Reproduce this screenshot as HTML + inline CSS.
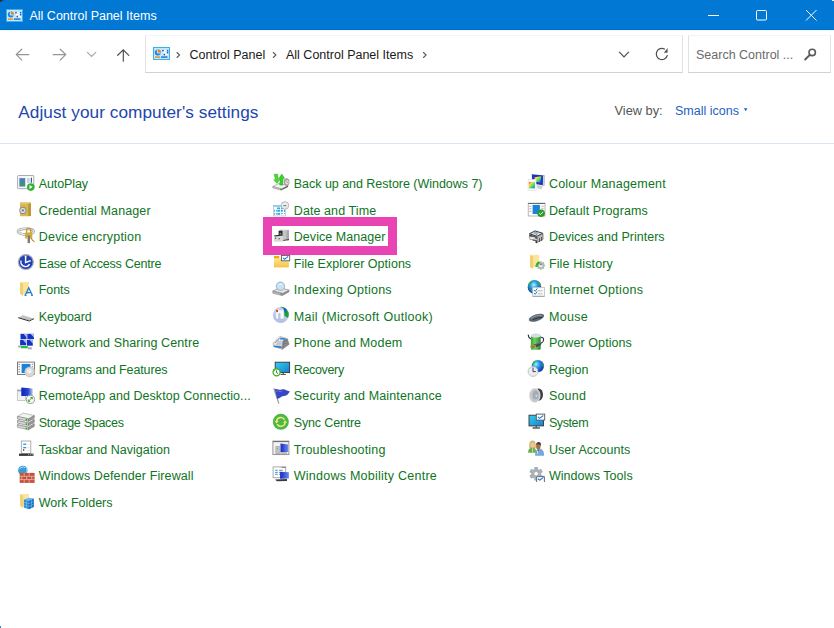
<!DOCTYPE html>
<html><head><meta charset="utf-8">
<style>
html,body{margin:0;padding:0;width:834px;height:628px;overflow:hidden;background:#fff;font-family:"Liberation Sans",sans-serif;}
.abs{position:absolute}
svg{display:block}
#title{position:absolute;left:0;top:0;width:834px;height:30px;background:#0078d4;box-shadow:inset 0 -1px 0 #006fcb;}
#tline{position:absolute;left:0;top:30px;width:834px;height:1px;background:#eef5fc}
#title .t{position:absolute;left:29.5px;top:7.5px;font-size:12.5px;color:#fff;line-height:16px;white-space:nowrap}
.it{position:absolute;font-size:12.5px;line-height:16px;color:#0f7424;white-space:nowrap}
.ic{position:absolute;width:16px;height:16px}
.ic svg{display:block}
#addr{position:absolute;left:145px;top:35px;width:536px;height:36px;border:1px solid #e2e2e2;border-top-color:#f4f4f4;border-bottom-color:#d2d2d2;box-sizing:content-box}
#search{position:absolute;left:688px;top:35px;width:141px;height:36px;border:1px solid #e2e2e2;border-top-color:#f4f4f4;border-bottom-color:#d2d2d2}
.crumb{position:absolute;font-size:12.5px;line-height:16px;color:#1a1a1a;white-space:nowrap}
#heading{position:absolute;left:18.3px;top:100.6px;font-size:17.2px;letter-spacing:0.06px;line-height:22px;color:#1c46ac;white-space:nowrap}
#viewby{position:absolute;left:614.5px;top:103px;font-size:12.8px;line-height:16px;color:#555;white-space:nowrap}
#small{position:absolute;left:675px;top:103px;font-size:12.5px;line-height:16px;color:#1e5fbf;white-space:nowrap}
#divider{position:absolute;left:0;top:143px;width:834px;height:1px;background:#dbe5f1}
#pink{position:absolute;left:263px;top:217px;width:116px;height:20px;border:9px solid #e844b4}
</style></head><body>
<div id="title">
  <div class="t">All Control Panel Items</div>
  <div class="abs" style="left:6px;top:8.5px;width:17px;height:13px"><svg width="17" height="13" viewBox="0 0 17 13"><rect x="0.5" y="0.5" width="16" height="12" fill="#c6e7fa" stroke="#3aaef0"/><circle cx="4.8" cy="5.5" r="3" fill="#1a86e0"/><path d="M4.8 5.5 V2.5 A3 3 0 0 1 7.8 5.5 Z" fill="#f28a00"/><path d="M4.3 2.5 V6 H7.8" fill="none" stroke="#fff" stroke-width="0.8"/><rect x="10" y="3" width="5" height="1.2" fill="#fff"/><rect x="10" y="5" width="5" height="1.2" fill="#fff"/><rect x="10" y="7" width="5" height="1.2" fill="#fff"/><circle cx="10" cy="3.6" r="0.9" fill="#1c5fc0"/><circle cx="14.6" cy="3.6" r="0.9" fill="#1c5fc0"/><circle cx="14.6" cy="5.6" r="0.9" fill="#1c5fc0"/><circle cx="11.3" cy="7.6" r="0.9" fill="#1c5fc0"/><rect x="2" y="9.4" width="5" height="1.4" fill="#f08a10"/><rect x="8" y="9.4" width="6.5" height="1.4" fill="#1a70d0"/></svg></div>
  <svg class="abs" style="left:0;top:0" width="834" height="30">
    <g stroke="#fff" stroke-width="1" fill="none">
      <path d="M708 15.5 H719"/>
      <rect x="756.5" y="10.5" width="10" height="9.5" rx="1"/>
      <path d="M806 10 L816.5 20.5 M816.5 10 L806 20.5"/>
    </g>
  </svg>

</div>
<div id="tline"></div>
<div id="addr"></div>
<div id="search"></div>
<svg class="abs" style="left:0;top:30px" width="834" height="50" viewBox="0 30 834 50">
  <g fill="none" stroke="#959595" stroke-width="1.2" stroke-linecap="round">
    <path d="M16.3 54.6 H28.8 M21.8 49.2 L16.3 54.6 L21.8 60.1"/>
    <path d="M53.2 54.6 H65.7 M60.2 49.2 L65.7 54.6 L60.2 60.1"/>
    <path d="M87.4 52.3 L91.6 56.5 L95.8 52.3" stroke="#a8a8a8"/>
  </g>
  <g fill="none" stroke="#505050" stroke-width="1.2" stroke-linecap="round">
    <path d="M123.3 49.8 V61.2 M117.7 55.3 L123.3 49.8 L128.8 55.3"/>
    <path d="M619.4 52.2 L624 56.8 L628.6 52.2"/>
    <path d="M667.3 55.5 A5.6 5.6 0 1 1 664.5 49" />
  </g>
  <path d="M667.6 48 L667.6 52.7 L663.8 52.7 Z" fill="#5a5a5a"/>
  <g fill="none" stroke="#5a5a5a" stroke-width="1.1" stroke-linecap="round">
    <path d="M177 52.5 L179.6 55 L177 57.5"/>
    <path d="M273.3 52.5 L275.9 55 L273.3 57.5"/>
    <path d="M423.5 52.5 L426.1 55 L423.5 57.5"/>
  </g>
  <circle cx="812.2" cy="52.4" r="3.2" fill="none" stroke="#5a5a5a" stroke-width="1.6"/>
  <path d="M809.8 54.9 L805.2 59.5" stroke="#5a5a5a" stroke-width="2" stroke-linecap="round"/>
</svg>
<div class="abs" style="left:153px;top:47px;width:17px;height:13px"><svg width="17" height="13" viewBox="0 0 17 13"><rect x="0.5" y="0.5" width="16" height="12" fill="#c6e7fa" stroke="#3aaef0"/><circle cx="4.8" cy="5.5" r="3" fill="#1a86e0"/><path d="M4.8 5.5 V2.5 A3 3 0 0 1 7.8 5.5 Z" fill="#f28a00"/><path d="M4.3 2.5 V6 H7.8" fill="none" stroke="#fff" stroke-width="0.8"/><rect x="10" y="3" width="5" height="1.2" fill="#fff"/><rect x="10" y="5" width="5" height="1.2" fill="#fff"/><rect x="10" y="7" width="5" height="1.2" fill="#fff"/><circle cx="10" cy="3.6" r="0.9" fill="#1c5fc0"/><circle cx="14.6" cy="3.6" r="0.9" fill="#1c5fc0"/><circle cx="14.6" cy="5.6" r="0.9" fill="#1c5fc0"/><circle cx="11.3" cy="7.6" r="0.9" fill="#1c5fc0"/><rect x="2" y="9.4" width="5" height="1.4" fill="#f08a10"/><rect x="8" y="9.4" width="6.5" height="1.4" fill="#1a70d0"/></svg></div>

<div class="crumb" style="left:189.5px;top:46.9px">Control Panel</div>
<div class="crumb" style="left:286px;top:46.9px">All Control Panel Items</div>
<div class="crumb" style="left:696px;top:47px;color:#6b6b6b">Search Control ...</div>
<div id="heading">Adjust your computer's settings</div>
<div id="viewby">View by:</div>
<div id="small">Small icons</div>
<svg class="abs" style="left:740px;top:104px" width="12" height="12" viewBox="740 104 12 12"><path d="M743.9 108.3 L747.5 108.3 L745.7 111.2 Z" fill="#1a5fcc"/></svg>
<div id="divider"></div>
<div id="pink"></div>
<div class="it" style="left:38.8px;top:176.00px;letter-spacing:-0.114px">AutoPlay</div>
<div class="it" style="left:38.8px;top:202.55px;letter-spacing:0.117px">Credential Manager</div>
<div class="it" style="left:38.8px;top:229.10px;letter-spacing:0.188px">Device encryption</div>
<div class="it" style="left:38.8px;top:255.65px;letter-spacing:-0.19px">Ease of Access Centre</div>
<div class="it" style="left:38.8px;top:282.20px;letter-spacing:-0.1px">Fonts</div>
<div class="it" style="left:38.8px;top:308.75px;letter-spacing:-0.086px">Keyboard</div>
<div class="it" style="left:38.8px;top:335.30px;letter-spacing:0.104px">Network and Sharing Centre</div>
<div class="it" style="left:38.8px;top:361.85px;letter-spacing:-0.13px">Programs and Features</div>
<div class="it" style="left:38.8px;top:388.40px;letter-spacing:0.061px">RemoteApp and Desktop Connectio...</div>
<div class="it" style="left:38.8px;top:414.95px;letter-spacing:-0.293px">Storage Spaces</div>
<div class="it" style="left:38.8px;top:441.50px;letter-spacing:0.028px">Taskbar and Navigation</div>
<div class="it" style="left:38.8px;top:468.05px;letter-spacing:0.108px">Windows Defender Firewall</div>
<div class="it" style="left:38.8px;top:494.60px;letter-spacing:-0.037px">Work Folders</div>
<div class="it" style="left:293.8px;top:176.00px;letter-spacing:-0.033px">Back up and Restore (Windows 7)</div>
<div class="it" style="left:293.8px;top:202.55px;letter-spacing:0.083px">Date and Time</div>
<div class="it" style="left:293.8px;top:229.10px;letter-spacing:0.047px">Device Manager</div>
<div class="it" style="left:293.8px;top:255.65px;letter-spacing:0.03px">File Explorer Options</div>
<div class="it" style="left:293.8px;top:282.20px;letter-spacing:0.267px">Indexing Options</div>
<div class="it" style="left:293.8px;top:308.75px;letter-spacing:0.304px">Mail (Microsoft Outlook)</div>
<div class="it" style="left:293.8px;top:335.30px;letter-spacing:0.2px">Phone and Modem</div>
<div class="it" style="left:293.8px;top:361.85px;letter-spacing:-0.343px">Recovery</div>
<div class="it" style="left:293.8px;top:388.40px;letter-spacing:0.148px">Security and Maintenance</div>
<div class="it" style="left:293.8px;top:414.95px;letter-spacing:-0.16px">Sync Centre</div>
<div class="it" style="left:293.8px;top:441.50px;letter-spacing:0.171px">Troubleshooting</div>
<div class="it" style="left:293.8px;top:468.05px;letter-spacing:0.246px">Windows Mobility Centre</div>
<div class="it" style="left:548.9px;top:176.00px;letter-spacing:0.224px">Colour Management</div>
<div class="it" style="left:548.9px;top:202.55px;letter-spacing:0.106px">Default Programs</div>
<div class="it" style="left:548.9px;top:229.10px;letter-spacing:0.021px">Devices and Printers</div>
<div class="it" style="left:548.9px;top:255.65px;letter-spacing:0.128px">File History</div>
<div class="it" style="left:548.9px;top:282.20px;letter-spacing:0.347px">Internet Options</div>
<div class="it" style="left:548.9px;top:308.75px;letter-spacing:0.35px">Mouse</div>
<div class="it" style="left:548.9px;top:335.30px;letter-spacing:0.083px">Power Options</div>
<div class="it" style="left:548.9px;top:361.85px;letter-spacing:0.0px">Region</div>
<div class="it" style="left:548.9px;top:388.40px;letter-spacing:0.2px">Sound</div>
<div class="it" style="left:548.9px;top:414.95px;letter-spacing:-0.4px">System</div>
<div class="it" style="left:548.9px;top:441.50px;letter-spacing:0.067px">User Accounts</div>
<div class="it" style="left:548.9px;top:468.05px;letter-spacing:0.05px">Windows Tools</div>
<svg class="abs" style="left:0;top:0" width="834" height="628" viewBox="0 0 834 628">
<defs>
<linearGradient id="gTeal" x1="0" y1="0" x2="0" y2="1"><stop offset="0" stop-color="#4a78c8"/><stop offset="1" stop-color="#3a9a6a"/></linearGradient>
<linearGradient id="gCyan" x1="0" y1="0" x2="1" y2="1"><stop offset="0" stop-color="#30d0f0"/><stop offset="1" stop-color="#1a7ed0"/></linearGradient>
<linearGradient id="gBlueL" x1="0" y1="0" x2="1" y2="0"><stop offset="0" stop-color="#1022b8"/><stop offset="0.6" stop-color="#2848d0"/><stop offset="1" stop-color="#b8c8f0"/></linearGradient>
<linearGradient id="gYel" x1="0" y1="0" x2="0" y2="1"><stop offset="0" stop-color="#fde68e"/><stop offset="1" stop-color="#f5c24a"/></linearGradient>
<linearGradient id="gGreen" x1="0" y1="0" x2="1" y2="0"><stop offset="0" stop-color="#3aa038"/><stop offset="0.4" stop-color="#70d060"/><stop offset="1" stop-color="#2a8a2a"/></linearGradient>
<linearGradient id="gRain" x1="0" y1="0" x2="1" y2="1"><stop offset="0" stop-color="#ff3030"/><stop offset="0.3" stop-color="#ffe040"/><stop offset="0.6" stop-color="#40e060"/><stop offset="1" stop-color="#3060ff"/></linearGradient>
<linearGradient id="gMon" x1="0" y1="0" x2="1" y2="0"><stop offset="0" stop-color="#1428c8"/><stop offset="1" stop-color="#6c8ae8"/></linearGradient>
</defs>
<g transform="translate(14 172)">
<rect x="3.6" y="3.5" width="16.2" height="13.2" rx="0.8" fill="#f2f2f2" stroke="#a4a4a4" stroke-width="0.9"/>
<rect x="4.6" y="4.7" width="14.2" height="11" fill="#fff"/>
<rect x="5.4" y="6.1" width="5.7" height="8.4" fill="url(#gTeal)" stroke="#8a9ad0" stroke-width="0.4"/>
<rect x="13" y="6" width="2.7" height="5" fill="#d0d0d0"/>
<rect x="16.8" y="5.7" width="1.2" height="5" fill="#2a5ab0"/>
<circle cx="16.8" cy="15.1" r="3.8" fill="#34b234"/>
<path d="M15.5 13.1 L18.6 15.1 L15.5 17.1 Z" fill="#fff"/></g>
<g transform="translate(14 198)">
<rect x="6" y="4.2" width="10.8" height="14" rx="0.8" fill="#d9b752"/>
<rect x="14.3" y="4.8" width="2.5" height="13.2" fill="#b99330"/>
<rect x="6.4" y="4.2" width="9.5" height="1.4" fill="#ebd084"/>
<circle cx="8.9" cy="12.4" r="3.6" fill="#8a8a8a"/>
<circle cx="8.9" cy="12.4" r="2.6" fill="#e4e4e4"/>
<path d="M7.2 11.5 L10.6 13.3 M8.9 10.5 V14.3 M7.2 13.3 L10.6 11.5" stroke="#9a9a9a" stroke-width="0.6"/>
<circle cx="8.9" cy="12.4" r="0.8" fill="#6a6a6a"/></g>
<g transform="translate(14 198)">
<ellipse cx="11.8" cy="33.6" rx="7.9" ry="2.9" fill="none" stroke="#9c9c9c" stroke-width="2.4"/>
<ellipse cx="11.8" cy="33.6" rx="7.9" ry="2.9" fill="none" stroke="#e8e8e8" stroke-width="1.2"/>
<path d="M12.6 35 V32.2 A2.1 2.1 0 0 1 16.8 32.2 V35" fill="none" stroke="#c49a2c" stroke-width="1.3"/>
<rect x="11.1" y="34.4" width="7.2" height="6.1" rx="0.6" fill="#d2aa3a"/>
<rect x="13.6" y="37.5" width="2.4" height="7.6" fill="#7c7c7c"/><rect x="12.6" y="39" width="1.2" height="1.6" fill="#c8c8c8"/>
<path d="M17 40 C18 42, 19.5 43.5, 20.6 43.6" fill="none" stroke="#c29a2a" stroke-width="1.3"/></g>
<g transform="translate(14 251)">
<circle cx="11.85" cy="11.1" r="8" fill="#b4bac6"/><circle cx="11.85" cy="11.1" r="7.6" fill="none" stroke="#80889a" stroke-width="0.6" stroke-dasharray="1 0.8"/>
<circle cx="11.85" cy="11.1" r="6.9" fill="#2242b4"/>
<path d="M7 9.5 C6.5 12.5, 8 15, 11 15.5 C13.5 15.8, 15 14.5, 15.5 13" fill="none" stroke="#fff" stroke-width="1.3"/>
<path d="M11.6 5.8 V11.5 L16.8 9.6" fill="none" stroke="#fff" stroke-width="1.4"/>
<circle cx="11.6" cy="5.4" r="0.9" fill="#fff"/></g>
<g transform="translate(14 251)"><rect x="6.1" y="31" width="8.8" height="12.100000000000001" fill="#fce49c"/><path d="M6.1 31.3 L9.1 33 L9.1 45.1 L6.1 43.1 Z" fill="#f2cf70"/>
<path d="M11.2 44.3 L14.7 36.8 L18.3 44.3 M12.5 41.6 H17" fill="none" stroke="#1a80d4" stroke-width="1.3"/>
<path d="M10.4 44.4 H12.6 M17 44.4 H19" stroke="#1a80d4" stroke-width="0.9"/></g>
<g transform="translate(14 304)">
<path d="M4.2 13.6 L9 11.1 L19.9 14.6 L15.2 16.9 Z" fill="#d4d4d4"/>
<path d="M4.2 13.7 L15.2 17 L19.9 14.7" fill="none" stroke="#303030" stroke-width="1"/>
<path d="M6 13.2 L16 16 M8 12 L18 15" stroke="#9a9a9a" stroke-width="0.5"/></g>
<g transform="translate(14 304)">
<rect x="6.5" y="29.8" width="6" height="5.4" fill="#1632c4"/>
<rect x="13.3" y="29.8" width="6.6" height="5.4" fill="#1632c4"/>
<rect x="6.1" y="35.9" width="6.1" height="5.4" fill="#1632c4"/>
<rect x="12.9" y="35.9" width="5.9" height="5.8" fill="#1632c4"/>
<path d="M9.5 29.8 H12.5 V33.5 Z M16.5 29.8 H19.9 V33.5 Z M9 35.9 H12.2 V39.5 Z M15.8 35.9 H18.8 V39.8 Z" fill="#c8d4f4" opacity="0.85"/>
<rect x="6.9" y="42" width="6.9" height="2.3" fill="#22c040"/>
<rect x="4.2" y="41.5" width="2.7" height="2" fill="#a8a8a8"/>
<rect x="14" y="43.3" width="3.8" height="2" fill="#a8a8a8"/></g>
<g transform="translate(14 357)">
<rect x="3.5" y="5.1" width="17" height="12.4" fill="#fff" stroke="#707070" stroke-width="0.9"/>
<path d="M4.5 7.3 H6 M4.5 9.8 H6 M4.5 12.3 H6 M4.5 14.8 H6 M17.8 7.3 H19.3 M17.8 9.8 H19.3" stroke="#6a6a6a" stroke-width="0.8"/>
<rect x="7.6" y="6.9" width="8.8" height="9.1" fill="#1a82da"/>
<circle cx="15.7" cy="14.9" r="5" fill="#d6d6d6" stroke="#b4b4b4" stroke-width="0.6"/>
<circle cx="15.2" cy="14" r="2.5" fill="#ececec"/>
<circle cx="15.7" cy="14.9" r="0.8" fill="#fff"/></g>
<g transform="translate(14 357)">
<rect x="3.4" y="32.9" width="8.1" height="10.7" fill="#f2f2f2" stroke="#b8b8b8" stroke-width="0.7"/>
<rect x="3.4" y="32.9" width="8.1" height="1.5" fill="#98a8c0"/>
<path d="M7.3 30.6 L18.7 31.6 L18.7 39 L7.3 39 Z" fill="url(#gBlueL)"/>
<circle cx="16.4" cy="42.4" r="4.1" fill="#fafafa" stroke="#909090" stroke-width="0.9"/>
<path d="M14.3 44.3 L18.3 40.5 M16.4 40.5 H18.3 V42.3 M14.3 42.5 V44.3 H16.2" fill="none" stroke="#22a022" stroke-width="0.9"/></g>
<g transform="translate(14 410)"><path d="M3.4 14.8 L9.2 11.5 L20.3 13.9 L14.5 17.3 Z" fill="#f2f2f2" stroke="#8a8a8a" stroke-width="0.5"/><path d="M3.4 14.8 L14.5 17.3 L14.5 19.8 L3.4 17.3 Z" fill="#d8d8d8" stroke="#6a6a6a" stroke-width="0.5"/><path d="M14.5 17.3 L20.3 13.9 L20.3 16.4 L14.5 19.8 Z" fill="#9c9c9c" stroke="#6a6a6a" stroke-width="0.5"/><circle cx="12.4" cy="18.3" r="0.9" fill="#22b022"/><path d="M3.4 10.600000000000001 L9.2 7.300000000000001 L20.3 9.7 L14.5 13.100000000000001 Z" fill="#f2f2f2" stroke="#8a8a8a" stroke-width="0.5"/><path d="M3.4 10.600000000000001 L14.5 13.100000000000001 L14.5 15.600000000000001 L3.4 13.100000000000001 Z" fill="#d8d8d8" stroke="#6a6a6a" stroke-width="0.5"/><path d="M14.5 13.100000000000001 L20.3 9.7 L20.3 12.2 L14.5 15.600000000000001 Z" fill="#9c9c9c" stroke="#6a6a6a" stroke-width="0.5"/><circle cx="12.4" cy="14.100000000000001" r="0.9" fill="#22b022"/><path d="M3.4 6.4 L9.2 3.1 L20.3 5.5 L14.5 8.9 Z" fill="#f2f2f2" stroke="#8a8a8a" stroke-width="0.5"/><path d="M3.4 6.4 L14.5 8.9 L14.5 11.4 L3.4 8.9 Z" fill="#d8d8d8" stroke="#6a6a6a" stroke-width="0.5"/><path d="M14.5 8.9 L20.3 5.5 L20.3 8 L14.5 11.4 Z" fill="#9c9c9c" stroke="#6a6a6a" stroke-width="0.5"/><circle cx="12.4" cy="9.9" r="0.9" fill="#22b022"/></g>
<g transform="translate(14 410)">
<rect x="7.3" y="31" width="9.5" height="12.4" fill="#fff" stroke="#9a9a9a" stroke-width="0.8"/>
<rect x="9.2" y="33.6" width="3" height="1.3" fill="#2a92e4"/>
<rect x="9.2" y="37" width="3" height="1.3" fill="#2a92e4"/>
<circle cx="9.7" cy="40.1" r="0.75" fill="#111"/>
<path d="M13 34.2 H15.5 M13 37.6 H15.5 M13 40.1 H15.5" stroke="#dedede" stroke-width="0.7"/>
<rect x="5" y="43.6" width="14.5" height="2.3" fill="#383838"/>
<path d="M14 44.7 H14.8 M15.9 44.7 H16.7 M17.8 44.7 H18.6" stroke="#eee" stroke-width="0.8"/></g>
<g transform="translate(14 463)">
<circle cx="8.8" cy="7.4" r="4.7" fill="#3a9ad8"/>
<path d="M5.5 6 C7 4, 9.5 3.5, 11 4.5" fill="none" stroke="#b8e4f8" stroke-width="1"/>
<path d="M12 4 C13 6, 13 8, 12 10" fill="none" stroke="#9ad4f0" stroke-width="0.8"/>
<rect x="5.7" y="9.9" width="14.9" height="10" fill="#c6513a"/>
<path d="M5.7 13.3 H20.6 M5.7 16.6 H20.6 M10.2 9.9 V13.3 M15.2 9.9 V13.3 M7.7 13.3 V16.6 M12.7 13.3 V16.6 M17.7 13.3 V16.6 M10.2 16.6 V19.9 M15.2 16.6 V19.9" stroke="#eed6cc" stroke-width="0.6"/></g>
<g transform="translate(14 463)"><rect x="6.1" y="31" width="8.8" height="12.100000000000001" fill="#fce49c"/><path d="M6.1 31.3 L9.1 33 L9.1 45.1 L6.1 43.1 Z" fill="#f2cf70"/>
<path d="M9.9 36.5 L14.8 34.8 L19.9 35.6 L15 37.8 Z" fill="#6ab8ec"/>
<path d="M9.9 36.5 L15 37.8 L15 46.3 L9.9 44.6 Z" fill="#2a8ad4"/>
<path d="M15 37.8 L19.9 35.6 L19.9 44 L15 46.3 Z" fill="#1a6ebc"/>
<path d="M9.9 39.3 L15 40.6 L19.9 38.4 M9.9 42 L15 43.4 L19.9 41.2 M12.4 37.2 V45.4 M17.4 36.8 V45.2" fill="none" stroke="#8ccaf4" stroke-width="0.5"/></g>
<g transform="translate(269 172)">
<path d="M3.8 14.5 L10 11.5 L19.1 13.5 L12.5 16.9 Z" fill="#f6f6f6" stroke="#8a8a8a" stroke-width="0.6"/>
<path d="M3.8 14.5 L12.5 16.9 L12.5 18.3 L3.8 15.9 Z" fill="#c8c8c8" stroke="#8a8a8a" stroke-width="0.5"/>
<path d="M12.5 16.9 L19.1 13.5 L19.1 14.9 L12.5 18.3 Z" fill="#5c5c5c"/>
<circle cx="11.6" cy="17.4" r="0.6" fill="#30b030"/>
<ellipse cx="17.6" cy="10" rx="2.9" ry="3.7" fill="#a0a0a0"/>
<ellipse cx="17.9" cy="10.2" rx="1.7" ry="2.2" fill="#e6dce6"/>
<path d="M17.2 9 L18.8 11" stroke="#d040a0" stroke-width="0.6"/>
<path d="M5 2.3 L8.6 2 C9 4, 9.2 6, 9.5 7.4 L11 7.2 L8 11.5 L4.6 7.8 L6.3 7.7 C6 5.8, 5.6 4, 5 2.3 Z" fill="#48dc30" stroke="#28a020" stroke-width="0.4"/>
<path d="M10.6 13 C10.8 11, 11 9, 11.2 6.6 L9.8 6.6 L12.8 2 L15.6 6.4 L14.1 6.5 C14 9, 13.9 11, 13.7 13.2 Z" fill="#3cd028" stroke="#22981a" stroke-width="0.4"/></g>
<g transform="translate(269 172)">
<rect x="4.3" y="33.4" width="12.4" height="10.6" fill="#f4fbfe" stroke="#b0b4b8" stroke-width="0.6"/>
<rect x="4.6" y="33.6" width="11.8" height="1" fill="#48c4e8"/>
<path d="M8.2 35.6 h2.8 v1.4 h-2.8z M12 35.6 h1.8 v1.4 h-1.8z M5.2 37.8 h0.9 v2 h-0.9z M7.3 37.8 h3.8 v2 h-3.8z M12 37.8 h1.8 v2 h-1.8z M15 37.8 h1 v2 h-1z M5.2 40.9 h0.9 v1.9 h-0.9z M7.3 40.9 h3.8 v1.9 h-3.8z M12 40.9 h1.8 v0.8 h-1.8z M15 40.9 h1 v0.8 h-1z" fill="#2aa8d8"/>
<path d="M8.6 37.8 V39.8 M8.6 40.9 V42.8" stroke="#f4fbfe" stroke-width="0.4"/>
<circle cx="16" cy="33.45" r="3.8" fill="#e4e8ec" stroke="#a8acb0" stroke-width="0.8"/>
<path d="M13.5 33 C14.5 31.5, 17 31.2, 18.5 32.5" fill="none" stroke="#fff" stroke-width="0.7"/>
<path d="M14.4 33.6 H17.2" stroke="#606870" stroke-width="0.9"/></g>
<g transform="translate(269 172)">
<path d="M9.6 58.6 L11.5 57.2 L20 57.4 L20 59 Z" fill="#e2e2e2"/>
<rect x="11.2" y="58.4" width="8.8" height="9.9" fill="#c4c4c4"/>
<rect x="17.5" y="58.4" width="2.5" height="9.9" fill="#a8a8a8"/>
<rect x="9.6" y="58.7" width="3.9" height="4.4" fill="#2a2a2a"/>
<circle cx="11.4" cy="61.4" r="0.7" fill="#30d030"/>
<path d="M4.9 63.6 L13 62.6 L14.2 63.4 L14.2 69.8 L4.9 69.8 Z" fill="#d8d8d8"/>
<path d="M4.9 63.6 L13 62.6 L14.2 63.4 L6 64.4 Z" fill="#2c2c2c"/>
<circle cx="6.6" cy="66.2" r="0.7" fill="#555"/>
<circle cx="10.2" cy="66.8" r="0.7" fill="#555"/>
<path d="M14.2 68.5 L20 67.5" stroke="#333" stroke-width="0.9"/></g>
<g transform="translate(269 251)">
<rect x="5" y="5" width="5.3" height="2.8" fill="#f0aa10"/>
<rect x="5" y="7.3" width="14.9" height="9.1" fill="url(#gYel)"/>
<rect x="12.4" y="4.4" width="8.3" height="5.4" fill="#fff" stroke="#5a5a5a" stroke-width="0.9"/><path d="M14.3 7.1 L15.6 8.3 L18.8 5.6" fill="none" stroke="#1a7fe0" stroke-width="1.1" stroke-linecap="round" stroke-linejoin="round"/></g>
<g transform="translate(269 251)">
<path d="M3.8 40 L10.5 36.8 L20.3 39 L13.5 42.5 Z" fill="#e4e4e4" stroke="#7a7a7a" stroke-width="0.6"/>
<path d="M3.8 40 L13.5 42.5 L13.5 44.7 L3.8 42.2 Z" fill="#b8b8b8" stroke="#7a7a7a" stroke-width="0.5"/>
<path d="M13.5 42.5 L20.3 39 L20.3 41.1 L13.5 44.7 Z" fill="#888"/>
<circle cx="12.3" cy="43.1" r="0.8" fill="#22b022"/>
<circle cx="11.5" cy="35.2" r="4.2" fill="#c4e2f8" stroke="#98a4b0" stroke-width="0.8"/>
<path d="M9.5 34 C10.5 33, 12 32.8, 13 33.6" fill="none" stroke="#fff" stroke-width="0.8"/></g>
<g transform="translate(269 304)">
<circle cx="11.85" cy="10.9" r="8" fill="#c6d2ea"/>
<path d="M11.2 2.9 A8 8 0 0 1 19.85 10.9 L19 14 L15.5 12 L14.5 4.5 Z" fill="#1e9e3e"/>
<path d="M14.8 3.5 A8 8 0 0 1 17.6 5.3 L17.2 8.6 L15 8 Z" fill="#2a5ad0"/>
<path d="M4.5 13 C5 16, 8 19, 12 19 C15 19, 17 17, 18 15 L15 14 L6 14 Z" fill="#b4c4e4"/>
<path d="M6.9 14.9 V7.5 C6.9 6, 8 5.7, 9 5.7 H13 C14 5.7, 14.9 6.2, 14.9 7.5 V14.9 Z" fill="#f8faff" stroke="#b0bcd8" stroke-width="0.5"/>
<path d="M9.2 14.9 V10 C9.2 8.6, 11.5 8.6, 11.5 10 V14.9 Z" fill="#b8c6e0"/>
<path d="M7.2 5.8 L9 6.2 L9 8.2 L7.2 7.8 Z" fill="#e82810"/>
<path d="M4 12 L6 11 M4.5 14 L6.5 13.5" stroke="#a8b8dc" stroke-width="0.8"/></g>
<g transform="translate(269 304)">
<path d="M4.2 38.6 L10.6 32.2 L18.2 34.6 L20.2 40.2 L13.2 45.4 L4.4 42.2 Z" fill="#dfe2e8" stroke="#8a8a8a" stroke-width="0.5"/>
<path d="M13.6 37 L18.2 34.6 L20.2 40.2 L13.2 45.4 L13.2 41 Z" fill="#777"/>
<path d="M15 39 L19 37.5 M14.5 41.5 L19.5 39.5 M14 43.5 L18 41.5" stroke="#aaa" stroke-width="0.6"/>
<path d="M5.2 39.4 L11.2 33.2" stroke="#f4f4f4" stroke-width="2.4"/>
<path d="M5.6 39.1 L10.9 33.6" stroke="#555" stroke-width="0.8"/>
<path d="M11.3 33.8 L16.6 34.3 L16.2 35.9 L10.9 35.3 Z" fill="#2a84dc"/>
<path d="M8 37.5 L14 38.3 M7.5 39 L13.5 39.8 M7 40.5 L13 41.3 M9.5 36.5 L8.5 41.5 M11.5 36.8 L10.5 41.8" stroke="#a8b0bc" stroke-width="0.5"/>
<path d="M4.8 41.4 L12.8 42.4 L12.8 44.3 L4.8 43.1 Z" fill="#2a78c8"/></g>
<g transform="translate(269 357)">
<rect x="6.2" y="5.2" width="14.4" height="10.4" fill="url(#gCyan)" stroke="#333" stroke-width="0.9"/>
<rect x="13.5" y="15.6" width="1.3" height="1.6" fill="#555"/>
<rect x="11.5" y="17" width="5.3" height="1" fill="#555"/>
<circle cx="7.6" cy="15.3" r="3.5" fill="#fff" stroke="#3cb020" stroke-width="1.3"/>
<path d="M3.6 12.6 L6.3 12.3 L5 14.8 Z" fill="#3cb020"/>
<path d="M7.4 13.3 V15.5 L9 16.5" fill="none" stroke="#333" stroke-width="0.8"/></g>
<g transform="translate(269 357)">
<path d="M4.8 31.3 L9.9 46.6" stroke="#9a9a9a" stroke-width="1.2"/>
<path d="M5.8 32.2 C8.5 31.4, 10.5 33.6, 12.8 32.6 C15.5 31.6, 18 34.2, 21 34.6 L18.4 37.8 C15.8 39.5, 13.2 38.8, 11.3 40.6 C9.8 42, 8.6 41.6, 8.2 42 Z" fill="#3848c4"/>
<path d="M7 34 C9 33.5, 11 35, 13 34.5" fill="none" stroke="#8090e0" stroke-width="0.6"/></g>
<g transform="translate(269 410)">
<circle cx="11.85" cy="11.85" r="8" fill="#4cb848"/>
<path d="M7.6 11.2 A4.3 4.3 0 0 1 15.6 9.6 M16.1 12.5 A4.3 4.3 0 0 1 8.1 14.1" fill="none" stroke="#f6e878" stroke-width="1.5"/>
<path d="M5.6 11 L9.6 11 L7.6 13.4 Z M14.1 12.7 L18.1 12.7 L16.1 10.3 Z" fill="#f6e878"/></g>
<g transform="translate(269 410)">
<rect x="3.9" y="31.1" width="16" height="13.5" fill="#f2f2f2" stroke="#8a8a8a" stroke-width="0.9"/>
<rect x="3.9" y="31.1" width="16" height="1" fill="#6a6a6a"/>
<path d="M11.5 33.6 L19.1 34.5 L19.1 42 L11.5 42 Z" fill="url(#gMon)"/>
<rect x="6.9" y="36.7" width="4.2" height="7.3" fill="#c4c4c4" stroke="#8a8a8a" stroke-width="0.5"/>
<circle cx="8.4" cy="38.3" r="0.5" fill="#30c030"/>
<rect x="12" y="42.5" width="6" height="1" fill="#888"/></g>
<g transform="translate(269 463)">
<rect x="4.1" y="3.9" width="12.6" height="10.8" fill="#fff" stroke="#a0a0a0" stroke-width="0.9"/>
<rect x="12.5" y="3.9" width="4.2" height="0.9" fill="#6a7a9a"/>
<path d="M6.1 7.3 H8.8 M6.1 9.4 H8.8 M6.1 11.3 H8.8" stroke="#2aa0c8" stroke-width="1"/>
<path d="M10.1 7.3 H13.8 M10.1 9.4 H11.5 M10.1 11.3 H11.5" stroke="#4a4a7a" stroke-width="0.7"/>
<path d="M11.1 8.8 L19.9 9.2 L19.9 15.5 L11.1 15.7 Z" fill="url(#gMon)"/>
<path d="M6.1 16.6 L18 16 L18 18 L8 18.3 Z" fill="#3a3a3a"/></g>
<g transform="translate(525 172)">
<path d="M6.8 2.3 L19.5 3.6 L19.2 13.6 L7.2 11.5 Z" fill="#1a34c4"/>
<path d="M18 3.4 L19.8 3.6 L19.5 14 L17.8 13.6 Z" fill="#d0d0d0"/>
<path d="M12 13 L18 13.8 L16.5 17.2 L12.5 16.6 Z" fill="#cfcfcf"/>
<path d="M9.2 5.2 L16.4 4.2 L15.2 10.7 L10 9.5 Z" fill="url(#gRain)"/>
<rect x="3.1" y="7.3" width="8" height="11" fill="#fff" stroke="#d0d0d0" stroke-width="0.5"/>
<rect x="3.9" y="9.9" width="6" height="6.5" fill="url(#gRain)"/></g>
<g transform="translate(525 172)">
<rect x="3.2" y="31.1" width="16.8" height="12.9" fill="#fff" stroke="#9a9a9a" stroke-width="0.7"/>
<rect x="3.2" y="31" width="16.8" height="1" fill="#6a6a6a"/>
<path d="M4.3 34.3 H6.3 M4.3 36.8 H6.3 M4.3 39.3 H6.3 M16.4 34.3 H18.6 M16.4 36.8 H18.6" stroke="#8a8a8a" stroke-width="0.7"/>
<rect x="7.6" y="32.9" width="7.3" height="9.1" fill="#1a82da"/>
<circle cx="16.1" cy="41.3" r="3.8" fill="#2c9c32"/><path d="M14.5 41.4 L15.7 42.5 L17.8 40.1" fill="none" stroke="#fff" stroke-width="0.9" stroke-linecap="round" stroke-linejoin="round"/></g>
<g transform="translate(525 225)">
<path d="M4.4 8.8 L10 5.9 L17.8 8.3 L12 11.3 Z" fill="#d8d8d8" stroke="#3a3a3a" stroke-width="1"/>
<ellipse cx="11" cy="7.9" rx="2.2" ry="0.9" fill="#80a8d8"/>
<circle cx="11.5" cy="9.4" r="0.5" fill="#30b030"/>
<path d="M4.2 9.2 L12 11.8 L12 14 L4.2 11.4 Z" fill="#4a4a4a"/>
<path d="M12 11.5 L18 8.5 L18 14.5 L12 17.5 Z" fill="#b8b8b8" stroke="#4a4a4a" stroke-width="0.6"/>
<path d="M4.2 11.6 L10 12 L10.5 14.3 L5 14.5 Z" fill="#f4f4f4" stroke="#555" stroke-width="0.5"/>
<path d="M7.5 14.5 L12 15.5 L12 18.3 L10.5 18 L10.5 16 L7.5 15.5 Z" fill="#3a3a3a"/>
<path d="M14.5 13 V17 M16.5 12 V16" stroke="#444" stroke-width="0.8"/></g>
<g transform="translate(525 225)"><rect x="5" y="29.8" width="9.1" height="12.2" fill="#fce49c"/><path d="M5 30.1 L8.2 31.8 L8.2 44 L5 42 Z" fill="#f2cf70"/><path d="M19.15 39.48 L20.12 39.64 L20.12 41.36 L19.15 41.52 L18.89 42.15 L19.46 42.94 L18.24 44.16 L17.45 43.59 L16.82 43.85 L16.66 44.82 L14.94 44.82 L14.78 43.85 L14.15 43.59 L13.36 44.16 L12.14 42.94 L12.71 42.15 L12.45 41.52 L11.48 41.36 L11.48 39.64 L12.45 39.48 L12.71 38.85 L12.14 38.06 L13.36 36.84 L14.15 37.41 L14.78 37.15 L14.94 36.18 L16.66 36.18 L16.82 37.15 L17.45 37.41 L18.24 36.84 L19.46 38.06 L18.89 38.85 Z" fill="#b4b8bc"/><circle cx="15.8" cy="40.5" r="1.6" fill="#fff"/>

<path d="M14.8 39.8 H17 M15.9 38.6 V39.8" stroke="#555" stroke-width="0.7"/>
<path d="M11.4 42 C11.4 39.5, 12.6 37.8, 14.6 37.2" fill="none" stroke="#20c020" stroke-width="2"/></g>
<g transform="translate(525 278)">
<defs><radialGradient id="gGlobe2" cx="0.45" cy="0.35" r="0.7"><stop offset="0" stop-color="#b0f4ff"/><stop offset="0.35" stop-color="#2aa8e8"/><stop offset="0.8" stop-color="#1a40c0"/><stop offset="1" stop-color="#1830a0"/></radialGradient></defs>
<circle cx="9.45" cy="8.9" r="6.8" fill="url(#gGlobe2)"/>
<path d="M3.3 7.5 C3.8 5, 5.5 3.2, 7.5 2.6 C7.8 4, 6.8 5.5, 5.5 6 C5 7.2, 4.2 7.8, 3.3 7.5 Z M13 3.3 C14.8 4.3, 16 6, 16.2 8.5 C15 8.5, 14 7, 13.6 5.5 Z M5.5 11.5 C7 11, 8 12, 7.8 14 C6.5 13.8, 5.5 13, 5.5 11.5 Z" fill="#38b038"/>
<rect x="7.7" y="9.3" width="11.7" height="9.3" fill="#fafafa" stroke="#b4b4b4" stroke-width="0.7"/>
<rect x="7.7" y="17.8" width="11.7" height="0.9" fill="#9a9a9a"/><path d="M9.2 12.3 L10.2 13.3 L12 10.8" fill="none" stroke="#1a84c8" stroke-width="1" stroke-linecap="round" stroke-linejoin="round"/><path d="M9.2 15.3 L10.2 16.3 L12 13.8" fill="none" stroke="#1a84c8" stroke-width="1" stroke-linecap="round" stroke-linejoin="round"/>
<path d="M12.8 12.8 H17.5 M12.8 15.8 H17.5" stroke="#a8a8a8" stroke-width="0.8"/></g>
<g transform="translate(525 278)">
<ellipse cx="11.45" cy="39.8" rx="8" ry="3.4" transform="rotate(-18 11.45 39.8)" fill="#5e6874"/>
<path d="M6 40.5 C9 38, 13 37, 16.5 37.5" fill="none" stroke="#9aa8b8" stroke-width="0.8"/>
<path d="M7.5 42 C10 40.5, 14 39.5, 17 39.5" fill="none" stroke="#222" stroke-width="0.8"/></g>
<g transform="translate(525 331)">
<path d="M3.3 3.6 C3.2 5.5, 3.8 7, 5.9 8 M15.7 6.3 C17.5 6.2, 18.8 7, 18.6 9 C18.4 10.5, 17.5 11.6, 16 12.2" fill="none" stroke="#2a2a4a" stroke-width="1.1"/>
<rect x="5.9" y="4.2" width="9.8" height="14.5" rx="1.2" fill="url(#gGreen)"/>
<ellipse cx="10.8" cy="4.4" rx="4.9" ry="2" fill="#d8dde2"/>
<ellipse cx="10.8" cy="3.6" rx="2" ry="1.2" fill="#bfe0f0"/>
<path d="M8.4 13.4 L16.4 11.5 L16 14.1 L11.5 16 Z" fill="#3c4454"/>
<path d="M9.5 13.6 L15.5 12.2" stroke="#8090a0" stroke-width="0.5"/>
<path d="M5 14.6 L10.7 14.2 L10.7 16.8 L5.5 16.8 Z" fill="#d4a048"/>
<path d="M6 15.2 H9.8 M6.5 16.2 H10" stroke="#5a4020" stroke-width="0.5"/></g>
<g transform="translate(525 331)">
<defs><radialGradient id="gGlobe" cx="0.35" cy="0.35" r="0.75"><stop offset="0" stop-color="#a8f0ff"/><stop offset="0.35" stop-color="#2aa0e8"/><stop offset="0.8" stop-color="#1a3cc0"/><stop offset="1" stop-color="#2040a0"/></radialGradient></defs>
<circle cx="12.9" cy="35.1" r="6.2" fill="url(#gGlobe)"/>
<path d="M7 34 C7.5 31.5, 9 30, 10.5 29.6 C10.8 31, 9.8 32.5, 8.5 33 C8.5 34, 7.8 34.5, 7 34 Z" fill="#30b030"/>
<path d="M17.2 31.5 C18.5 32.5, 19.2 34.5, 18.8 36.5 C18 36, 17.2 34.5, 17.2 31.5 Z" fill="#40b838"/>
<circle cx="8" cy="40.5" r="5" fill="#eceef0" stroke="#b4b8bc" stroke-width="0.7"/>
<path d="M8 36.6 V40.6 H10.8" fill="none" stroke="#3a4450" stroke-width="1"/>
<path d="M8 36 V36.6 M12.4 40.5 H11.8 M8 44.9 V44.3 M3.6 40.5 H4.2 M11 37.5 L10.6 37.9 M11 43.5 L10.6 43.1 M5 43.5 L5.4 43.1 M5 37.5 L5.4 37.9" stroke="#a0a4a8" stroke-width="0.6"/></g>
<g transform="translate(525 384)">
<ellipse cx="13.6" cy="10.6" rx="4.4" ry="6.2" fill="#3c3c3c"/>
<ellipse cx="9.7" cy="11.4" rx="5.4" ry="7.1" fill="#c4c8cc" stroke="#e6e6e6" stroke-width="0.8"/>
<ellipse cx="10.5" cy="11" rx="3" ry="4.5" fill="#a4acb4"/>
<circle cx="11.4" cy="11.8" r="1" fill="#d8e0e8"/></g>
<g transform="translate(525 384)">
<rect x="4" y="31.2" width="14.5" height="10.7" fill="url(#gCyan)" stroke="#333" stroke-width="0.9"/>
<rect x="10.5" y="41.9" width="1.5" height="1.4" fill="#555"/>
<rect x="7.6" y="43.2" width="7.3" height="1.5" fill="#555"/>
<rect x="11.3" y="30.1" width="8.4" height="6" fill="#fff" stroke="#555" stroke-width="0.9"/><path d="M13.2 33.2 L14.6 34.4 L18 31.8" fill="none" stroke="#1a7fe0" stroke-width="1.1" stroke-linecap="round" stroke-linejoin="round"/></g>
<g transform="translate(525 437)">
<path d="M4.4 11 C3.8 7, 4.6 3.6, 7.6 3.6 C10.6 3.6, 11 7, 10.7 11.2 Z" fill="#ccb46a"/>
<path d="M3.1 15.7 C3 12.5, 4.5 10.4, 7.3 10.4 C10 10.4, 11.3 12.3, 11.1 15.7 Z" fill="#6aae4c"/>
<path d="M7.6 11 V15.5" stroke="#d8ecd0" stroke-width="0.7"/>
<ellipse cx="7.6" cy="8" rx="2.2" ry="2.8" fill="#eec49c"/>
<path d="M10.1 18.7 C10 14.5, 11.5 11.8, 14.5 11.8 C17.6 11.8, 19.2 14.5, 19.1 18.7 Z" fill="#74a8dc"/>
<path d="M12.6 12.8 V17" stroke="#e8f0f8" stroke-width="0.8"/>
<path d="M11.8 12.8 L14.2 12.8 L13.4 14.2 Z" fill="#7a4a28"/>
<ellipse cx="13.3" cy="9.4" rx="2.2" ry="3" fill="#a8703c"/>
<path d="M11.1 8.6 C10.8 5.8, 12.4 5, 13.8 5 C15.6 5, 16.2 6.5, 16 9.2 L15.2 8 C14 7.2, 12.5 7.2, 11.6 7.8 Z" fill="#3a3a3a"/></g>
<g transform="translate(525 437)"><path d="M16.06 37.45 L17.86 38.61 L16.05 41.75 L14.14 40.77 L13.01 41.42 L12.91 43.56 L9.29 43.56 L9.19 41.42 L8.06 40.77 L6.15 41.75 L4.34 38.61 L6.14 37.45 L6.14 36.15 L4.34 34.99 L6.15 31.85 L8.06 32.83 L9.19 32.18 L9.29 30.04 L12.91 30.04 L13.01 32.18 L14.14 32.83 L16.05 31.85 L17.86 34.99 L16.06 36.15 Z" fill="#a8b0ba"/><circle cx="11.1" cy="36.8" r="1.8" fill="#fff"/>
<rect x="11.1" y="39.1" width="8.8" height="6" fill="#fff"/>
<path d="M11.6 45 V39.6 H19.4 V45" fill="none" stroke="#5a5a5a" stroke-width="0.9"/><path d="M13.2 42 L14.6 43.2 L18 40.6" fill="none" stroke="#1a7fe0" stroke-width="1.1" stroke-linecap="round" stroke-linejoin="round"/></g>
</svg>
<div class="abs" style="left:0;top:0;width:2px;height:2px;background:#3a2a10;border-bottom-right-radius:2px"></div>
<div class="abs" style="left:0;top:0;width:4px;height:1px;background:#203060;opacity:.6"></div>
<div class="abs" style="left:832px;top:0;width:2px;height:1px;background:#f6eee0"></div>
<div class="abs" style="left:0;top:626px;width:1px;height:2px;background:#2a8ae0"></div>
</body></html>
